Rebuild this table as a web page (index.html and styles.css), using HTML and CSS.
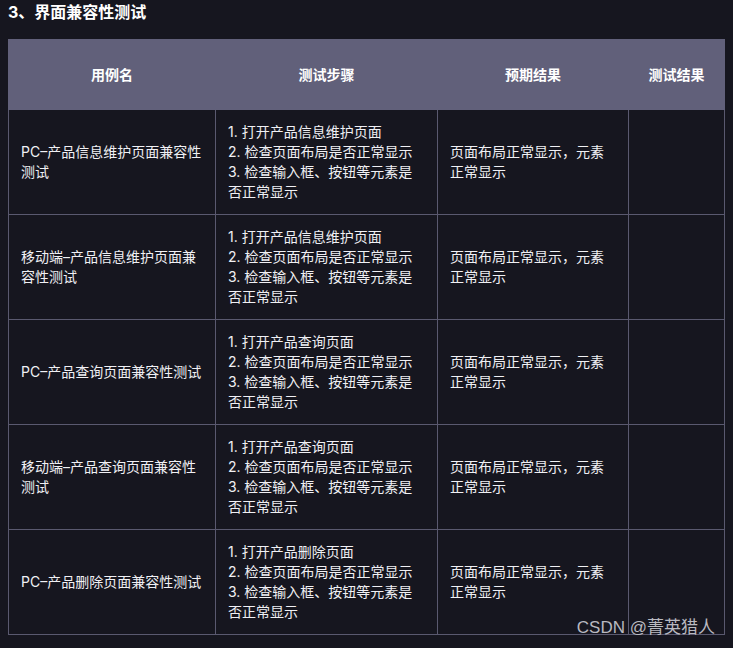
FILE: index.html
```html
<!DOCTYPE html>
<html lang="zh">
<head>
<meta charset="utf-8">
<link rel="stylesheet" href="styles.css">
</head>
<body>
<h3 class="title">3、界面兼容性测试</h3>
<table class="cases">
  <colgroup>
    <col class="c1"><col class="c2"><col class="c3"><col class="c4">
  </colgroup>
  <thead>
    <tr><th>用例名</th><th>测试步骤</th><th>预期结果</th><th>测试结果</th></tr>
  </thead>
  <tbody>
    <tr>
      <td>PC–产品信息维护页面兼容性测试</td>
      <td>1. 打开产品信息维护页面<br>2. 检查页面布局是否正常显示<br>3. 检查输入框、按钮等元素是否正常显示</td>
      <td>页面布局正常显示，元素正常显示</td>
      <td></td>
    </tr>
    <tr>
      <td>移动端–产品信息维护页面兼容性测试</td>
      <td>1. 打开产品信息维护页面<br>2. 检查页面布局是否正常显示<br>3. 检查输入框、按钮等元素是否正常显示</td>
      <td>页面布局正常显示，元素正常显示</td>
      <td></td>
    </tr>
    <tr>
      <td>PC–产品查询页面兼容性测试</td>
      <td>1. 打开产品查询页面<br>2. 检查页面布局是否正常显示<br>3. 检查输入框、按钮等元素是否正常显示</td>
      <td>页面布局正常显示，元素正常显示</td>
      <td></td>
    </tr>
    <tr>
      <td>移动端–产品查询页面兼容性测试</td>
      <td>1. 打开产品查询页面<br>2. 检查页面布局是否正常显示<br>3. 检查输入框、按钮等元素是否正常显示</td>
      <td>页面布局正常显示，元素正常显示</td>
      <td></td>
    </tr>
    <tr>
      <td>PC–产品删除页面兼容性测试</td>
      <td>1. 打开产品删除页面<br>2. 检查页面布局是否正常显示<br>3. 检查输入框、按钮等元素是否正常显示</td>
      <td>页面布局正常显示，元素正常显示</td>
      <td></td>
    </tr>
  </tbody>
</table>
<div class="watermark">CSDN @菁英猎人</div>
</body>
</html>
```
FILE: styles.css
```css
html, body {
  background: #16161f;
}
body {
  margin: 0 8px;
  color: #f0f0f4;
  font-family: "Inter", "Noto Sans CJK SC", sans-serif;
  font-size: 14px;
  line-height: 20px;
  position: relative;
  height: 648px;
  overflow: hidden;
}
.title {
  margin: 0 0 15px 0;
  font-size: 16px;
  line-height: 24px;
  font-weight: 700;
  color: #ffffff;
}
.cases {
  border-collapse: collapse;
  table-layout: fixed;
  width: 716px;
}
.c1 { width: 207px; }
.c2 { width: 222px; }
.c3 { width: 191px; }
.c4 { width: 96px; }
.cases th {
  background: #61607a;
  height: 70px;
  padding: 0 12px;
  font-weight: 700;
  text-align: center;
  color: #ffffff;
  border: 1px solid #61607a;
  box-sizing: border-box;
}
.cases td {
  height: 105px;
  box-sizing: border-box;
  padding: 0 12px;
  border: 1px solid #5a596f;
  vertical-align: middle;
  text-align: left;
}
.watermark {
  position: absolute;
  right: 10px;
  top: 617px;
  font-family: "Liberation Sans", "Noto Sans CJK SC", sans-serif;
  font-size: 17px;
  line-height: 22px;
  color: #b9b9c0;
}
```
